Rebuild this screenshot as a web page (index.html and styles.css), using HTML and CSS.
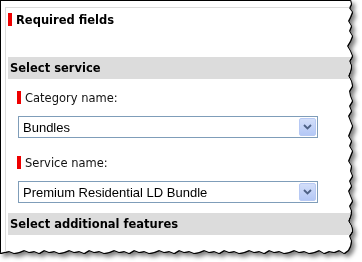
FILE: index.html
```html
<!DOCTYPE html>
<html lang="en">
<head>
    <meta charset="UTF-8">
    <meta name="viewport" content="width=device-width, initial-scale=1.0">
    <title>Select service</title>
    <link rel="stylesheet" href="styles.css">
</head>
<body>
    <div class="frame">
        <div class="sheet">
            <div class="panel">
                <div class="required">
                    <span class="mark"></span>
                    <span class="required-text">Required fields</span>
                </div>

                <div class="section-title">Select service</div>

                <div class="field">
                    <div class="field-label">
                        <span class="mark"></span>
                        <label>Category name:</label>
                    </div>
                    <div class="select">
                        <span class="select-value">Bundles</span>
                        <span class="select-btn">
                            <svg width="9" height="6" viewBox="0 0 9 6">
                                <path d="M1 1 L4.5 4.5 L8 1" fill="none" stroke="#4d6185" stroke-width="1.8"/>
                            </svg>
                        </span>
                    </div>
                </div>

                <div class="field field-second">
                    <div class="field-label">
                        <span class="mark"></span>
                        <label>Service name:</label>
                    </div>
                    <div class="select">
                        <span class="select-value">Premium Residential LD Bundle</span>
                        <span class="select-btn">
                            <svg width="9" height="6" viewBox="0 0 9 6">
                                <path d="M1 1 L4.5 4.5 L8 1" fill="none" stroke="#4d6185" stroke-width="1.8"/>
                            </svg>
                        </span>
                    </div>
                </div>

                <div class="section-title section-last">Select additional features</div>
            </div>
        </div>
    </div>
</body>
</html>
```

FILE: styles.css
```css
body {
    margin: 0;
    background-color: #ffffff;
    font-family: "DejaVu Sans", sans-serif;
    color: #000;
}

/* papel rasgado: borda preta + sombra seguem o recorte */
.frame {
    width: 362px;
    height: 262px;
    filter: drop-shadow(1px 0 0 #000) drop-shadow(0 1px 0 #000) drop-shadow(3px 3px 2px rgba(0, 0, 0, 0.5));
}

.sheet {
    width: 354px;
    height: 256px;
    box-sizing: border-box;
    background-color: #ffffff;
    border-top: 1px solid #000;
    border-left: 1px solid #000;
    padding: 6px 0 0 4px;
    overflow: hidden;
    clip-path: polygon(
        0 0, 350px 0, 351px 4px, 349px 8px, 352px 12px, 350px 17px, 348px 21px, 351px 26px,
        349px 31px, 352px 36px, 350px 41px, 347px 46px, 350px 51px, 352px 56px, 349px 61px,
        351px 66px, 350px 71px, 348px 76px, 351px 81px, 352px 86px, 349px 91px, 350px 96px,
        352px 101px, 349px 106px, 351px 111px, 348px 116px, 350px 121px, 352px 126px, 350px 131px,
        348px 136px, 351px 141px, 349px 146px, 352px 151px, 350px 156px, 348px 161px, 351px 166px,
        350px 171px, 352px 176px, 349px 181px, 351px 186px, 348px 191px, 350px 196px, 352px 201px,
        349px 206px, 351px 211px, 350px 216px, 348px 221px, 351px 226px, 352px 231px, 349px 236px,
        351px 241px, 350px 246px, 348px 250px,
        344px 253px, 339px 250px, 334px 252px, 329px 251px, 324px 253px, 319px 250px, 314px 252px,
        309px 253px, 304px 251px, 299px 252px, 294px 250px, 289px 252px, 284px 253px, 279px 251px,
        274px 252px, 269px 250px, 264px 253px, 259px 251px, 254px 252px, 249px 250px, 244px 252px,
        239px 253px, 234px 251px, 229px 252px, 224px 250px, 219px 253px, 214px 251px, 209px 252px,
        204px 250px, 199px 252px, 194px 253px, 189px 251px, 184px 252px, 179px 250px, 174px 253px,
        169px 251px, 164px 252px, 159px 250px, 154px 252px, 149px 253px, 144px 251px, 139px 252px,
        134px 250px, 129px 253px, 124px 251px, 119px 252px, 114px 250px, 109px 252px, 104px 253px,
        99px 251px, 94px 252px, 89px 250px, 84px 253px, 79px 251px, 74px 252px, 69px 250px,
        64px 252px, 59px 253px, 54px 251px, 49px 252px, 44px 250px, 39px 253px, 34px 251px,
        29px 252px, 24px 250px, 19px 252px, 14px 253px, 9px 251px, 4px 252px, 0 253px
    );
}

.panel {
    width: 420px;
    height: 300px;
    border-top: 1px solid #dcdcdc;
    border-left: 1px solid #dcdcdc;
    padding-left: 2px;
}

.mark {
    display: inline-block;
    width: 4px;
    height: 13px;
    background-color: #ee0000;
    flex-shrink: 0;
}

.required {
    display: flex;
    align-items: center;
    gap: 4px;
    margin-top: 5px;
    height: 13px;
}

.required-text {
    font-size: 11.5px;
    font-weight: bold;
}

.section-title {
    height: 22px;
    line-height: 22px;
    margin-top: 31px;
    padding-left: 2px;
    background-color: #dcdcdc;
    font-size: 11.5px;
    font-weight: bold;
}

.field {
    padding-left: 9px;
    margin-top: 12px;
}

.field-second {
    margin-top: 18px;
}

.field-label {
    display: flex;
    align-items: center;
    gap: 4px;
    height: 13px;
}

.field-label label {
    font-size: 11.5px;
    color: #111;
}

.select {
    width: 300px;
    height: 22px;
    box-sizing: border-box;
    margin-top: 12px;
    margin-left: 1px;
    border: 1px solid #7f9db9;
    display: flex;
    align-items: center;
    justify-content: space-between;
    padding: 1px 1px 1px 4px;
}

.select-value {
    font-family: "Liberation Sans", Arial, sans-serif;
    font-size: 13px;
}

.select-btn {
    width: 15px;
    height: 16px;
    border: 1px solid #b7c9f4;
    border-radius: 2px;
    background: linear-gradient(#d2def9, #b4c8f6);
    display: flex;
    align-items: center;
    justify-content: center;
}

.section-last {
    margin-top: 10px;
}
```
